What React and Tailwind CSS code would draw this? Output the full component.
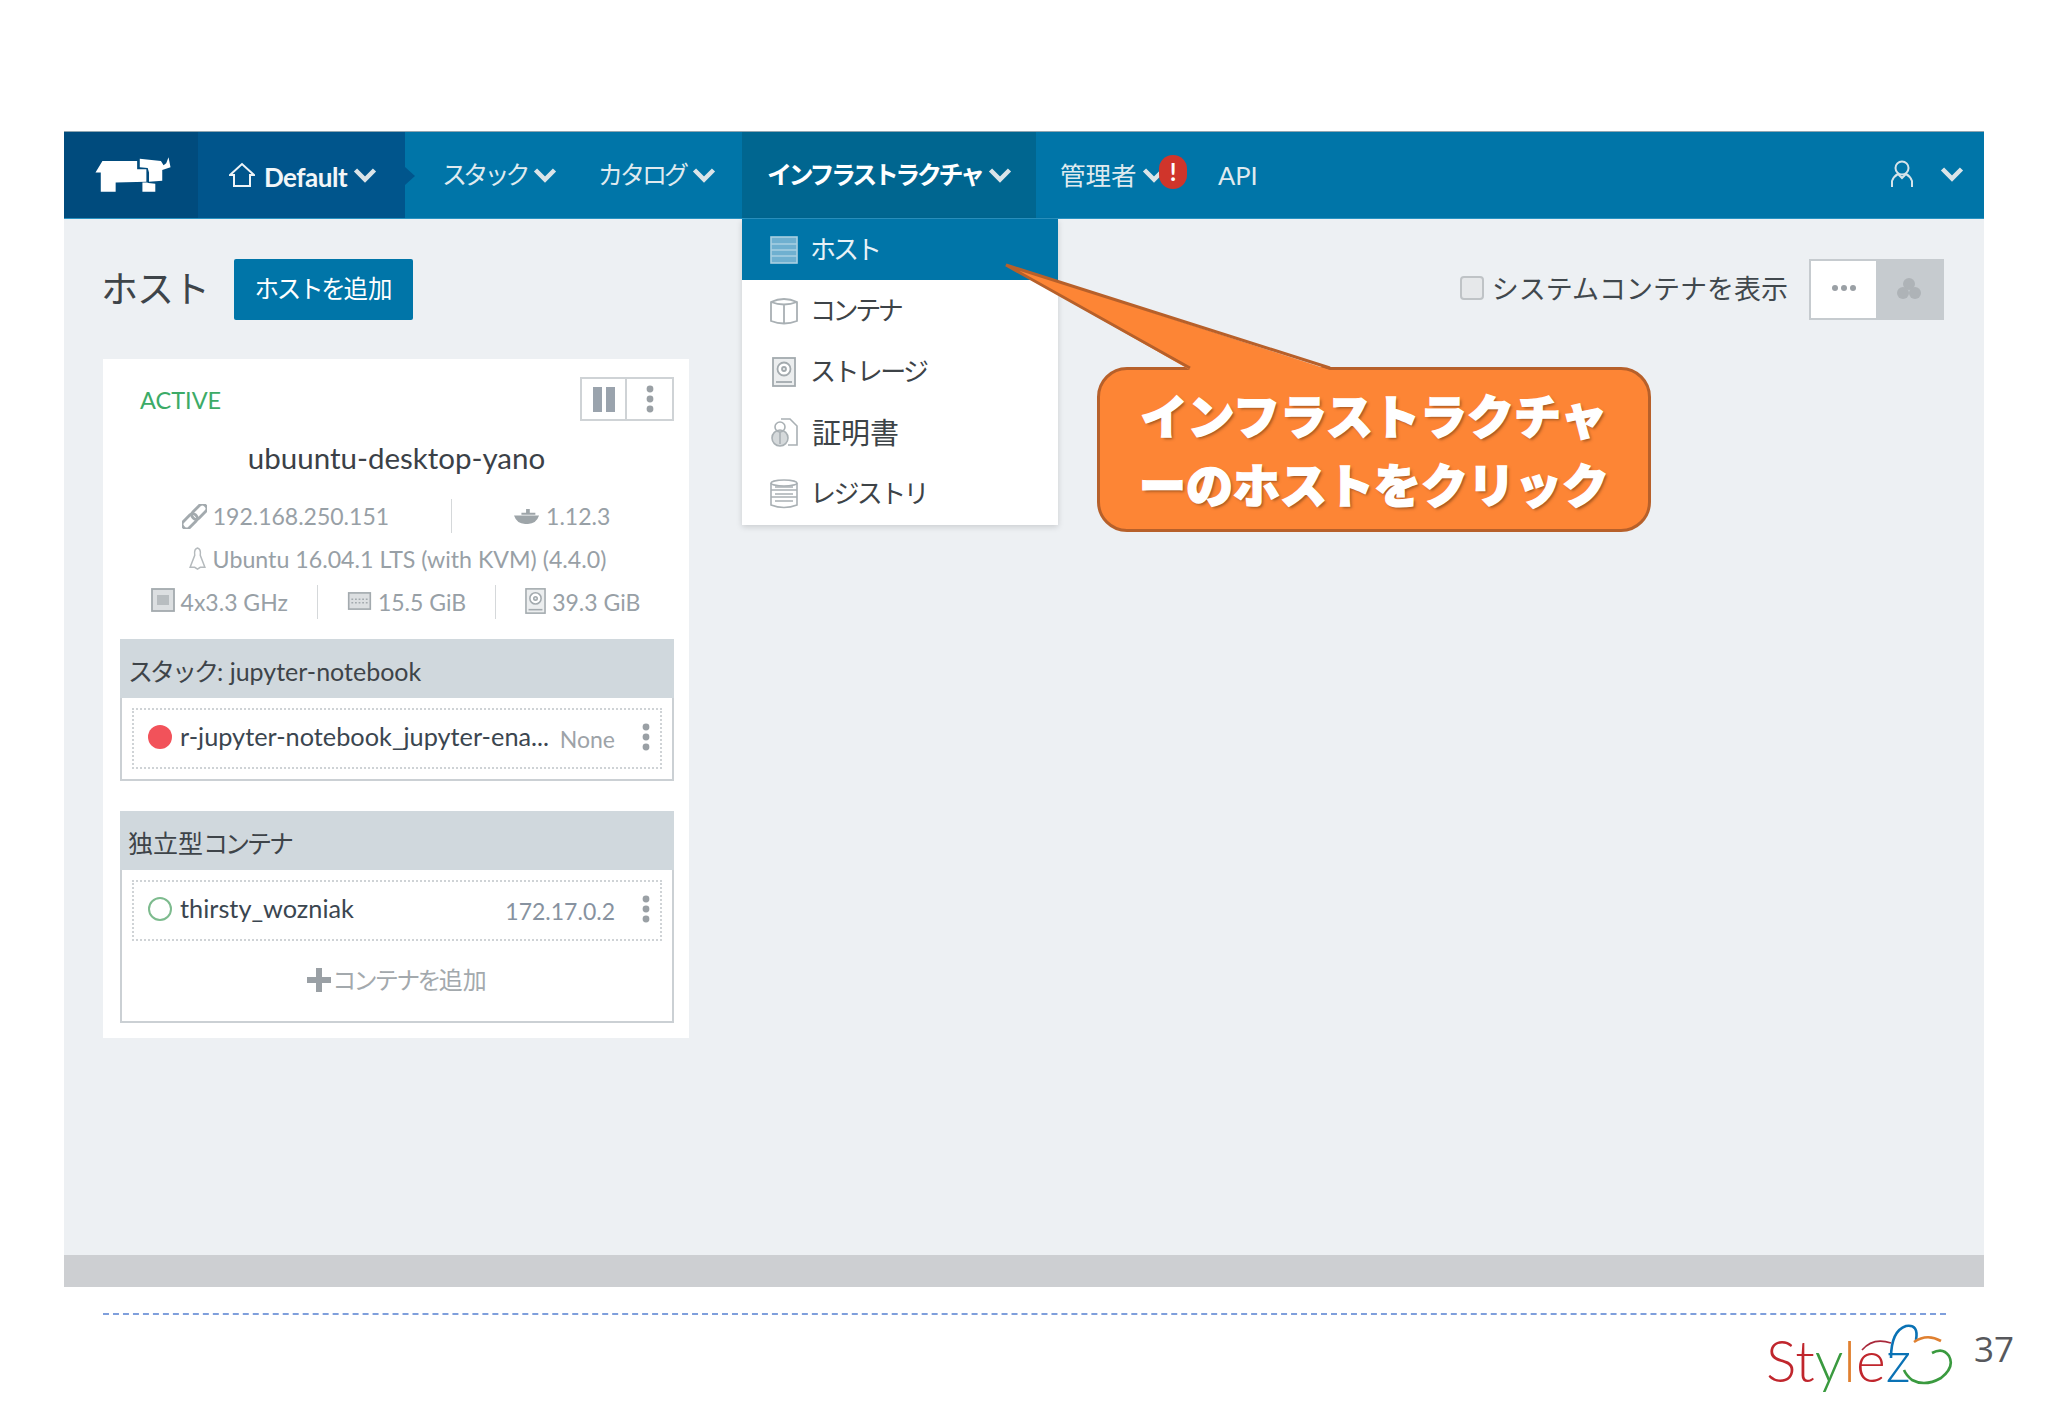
import React from 'react';

const Chev = ({ cls = '' }) => (
  <svg viewBox="0 0 24 16" className={`w-[24px] h-[16px] ${cls}`} fill="none" stroke="#dbe4e8" strokeWidth="4.5"><path d="M2.5 3 L12 12.5 L21.5 3" /></svg>
);
const Kana = ({ children, t = 'tracking-[-3px]' }) => <span className={t}>{children}</span>;

const Rhino = () => (
  <svg viewBox="40 50 235 115" className="w-[78px] h-[38px] ml-[3px]" fill="#fff">
    <path d="M44 100 L65 65 L170 65 L170 90 L198 90 L198 128 L105 130 L105 158 L60 158 L60 100 Z" />
    <path d="M178 58 L242 65 L250 78 L258 72 L265 54 L271 84 L246 92 L246 125 L206 128 L206 100 L202 86 L178 84 Z" />
    <path d="M186 130 L200 130 L204 132 L225 134 L225 158 L186 158 Z" />
  </svg>
);

const ServerI = ({ light }) => (
  <svg viewBox="0 0 28 28" className="w-[28px] h-[30px]" fill={light ? '#6fb0d0' : 'none'} stroke={light ? '#a9d0e2' : '#a9b0b4'} strokeWidth="1.6">
    <rect x="1" y="1" width="26" height="26" /><path d="M1 8h26M1 14h26M1 20h26" />
  </svg>
);
const BoxI = () => (
  <svg viewBox="0 0 28 30" className="w-[28px] h-[30px]" fill="none" stroke="#a9b0b4" strokeWidth="1.8">
    <path d="M1 6 Q14 0 27 6 V25 Q14 30 1 25 Z M1 6 Q14 11 27 6 M14 9 V28" />
  </svg>
);
const DiskI = ({ c = 'w-[24px] h-[30px]' }) => (
  <svg viewBox="0 0 24 30" className={c} fill="#eceeef" stroke="#a3aaae" strokeWidth="1.8">
    <rect x="1" y="1" width="22" height="28" /><circle cx="12" cy="12" r="6.5" fill="#fff" /><circle cx="12" cy="12" r="2" /><path d="M4 25h16" />
  </svg>
);
const CertI = () => (
  <svg viewBox="0 0 28 30" className="w-[28px] h-[30px]" fill="none" stroke="#a9b0b4" strokeWidth="1.6">
    <path d="M11 1 H20 L27 8 V27 H18" /><circle cx="10" cy="20" r="8" fill="#d5d9db" /><circle cx="10" cy="9" r="5" /><path d="M10 14v12" />
  </svg>
);
const RegI = () => (
  <svg viewBox="0 0 28 30" className="w-[28px] h-[30px]" fill="none" stroke="#a9b0b4" strokeWidth="1.6">
    <ellipse cx="14" cy="4" rx="13" ry="3" /><path d="M1 4 V26 Q14 31 27 26 V4 M1 11 H27 M1 18 H27 M5 8h18M5 15h18M5 22h18" />
  </svg>
);
const Sep = () => <div className="w-px h-[34px] bg-[#d5d8da]" />;
const Dots = ({ c = '#9aa0a5' }) => (
  <svg viewBox="0 0 8 28" className="w-[8px] h-[28px]" fill={c}><circle cx="4" cy="4" r="3.4" /><circle cx="4" cy="14" r="3.4" /><circle cx="4" cy="24" r="3.4" /></svg>
);

const MenuItem = ({ icon, children, active }) => (
  <div className={`flex items-center h-[61px] pl-[28px] gap-[12px] text-[26px] ${active ? 'bg-[#0075a8] text-[#e8f2f7]' : 'text-[#3d4347]'}`}>
    {icon}
    <span>{children}</span>
  </div>
);

const Stat = ({ icon, children }) => (
  <div className="flex items-center gap-[6px] text-[#98a0a6]">{icon}<span>{children}</span></div>
);

const Row = ({ dot, name, val, valCls }) => (
  <div className="mx-[10px] my-[10px] h-[61px] border-2 border-dotted border-[#cfd3d6] flex items-center pl-[14px] pr-[10px]">
    {dot}
    <span className="ml-[8px] mb-[3px] text-[25.3px] text-[#3b4650] whitespace-nowrap">{name}</span>
    <span className={`ml-auto mr-[27px] mt-[2px] text-[23px] ${valCls}`}>{val}</span>
    <div className="mb-[3px] flex"><Dots /></div>
  </div>
);

export default function App() {
  return (
    <div className="relative w-[2048px] h-[1418px] bg-white overflow-hidden font-['Lato','Noto_Sans_CJK_JP',sans-serif] pt-[131px]">
      <div className="mx-[64px] w-[1920px]">
        {/* nav */}
        <div className="relative flex h-[88px] bg-[#0075a8] border-t border-[#8fa5b0] border-b border-b-[#2a93c2] text-[#dfeaef] text-[25px]">
          <div className="w-[134px] bg-[#004b7d] flex items-center justify-center"><Rhino /></div>
          <div className="relative w-[207px] bg-[#00558c] flex items-center pl-[31px] text-[#f2f6f8] font-bold">
            <svg viewBox="0 0 26 26" className="w-[26px] h-[26px]" fill="none" stroke="#eef4f7" strokeWidth="2"><path d="M1 13 L13 2 L25 13 H21 V24 H5 V13 Z" /></svg>
            <span className="ml-[9px] mt-[5px] text-[26px] tracking-[-0.5px]">Default</span>
            <Chev cls="ml-[6px]" />
            <div className="absolute left-full top-[35px] w-0 h-0 border-y-[9px] border-y-transparent border-l-[10px] border-l-[#00558c]" />
          </div>
          <div className="flex items-center pl-[37px] w-[193px]"><Kana t="tracking-[-3.8px]">スタック</Kana><Chev cls="ml-[6px]" /></div>
          <div className="flex items-center w-[144px]"><Kana>カタログ</Kana><Chev cls="ml-[6px]" /></div>
          <div className="flex items-center w-[294px] pl-[25px] bg-[#006690] text-white font-bold"><Kana t="tracking-[-3.4px]">インフラストラクチャ</Kana><Chev cls="ml-[6px]" /></div>
          <div className="relative flex items-center pl-[24px] w-[182px]">
            <span className="text-[25.5px]">管理者</span><Chev cls="ml-[5px] w-[20px]" />
            <span className="absolute left-[123px] top-[23px] w-[28px] h-[34px] rounded-full bg-[#d0352b] text-white text-[24px] font-bold flex items-center justify-center leading-none">!</span>
          </div>
          <div className="flex items-center text-[25.5px]">API</div>
          <div className="ml-auto flex items-center gap-[26px] pr-[20px]">
            <svg viewBox="0 0 24 28" className="w-[24px] h-[28px] mb-[2px]" fill="none" stroke="#d6e4ea" strokeWidth="2"><circle cx="12" cy="8" r="6.5" /><path d="M2 27 V21 Q4 16 8 14 L12 18 L16 14 Q20 16 22 21 V27" /></svg>
            <Chev cls="mb-[3px]" />
          </div>
        </div>

        {/* main */}
        <div className="bg-[#edf0f3] h-[1036px] px-[39px]">
          <div className="flex items-center h-[140px]">
            <h1 className="text-[37px] -ml-[2px] text-[#3e4449] font-normal w-[133px] tracking-[-1px]">ホスト</h1>
            <button className="w-[179px] h-[61px] rounded-[2px] bg-[#0075a8] text-white text-[24.5px]"><Kana t="tracking-[-2.2px]">ホストを</Kana>追加</button>
            <label className="ml-auto flex items-center text-[27px] text-[#41484d]">
              <span className="w-[24px] h-[24px] rounded-[4px] border-2 border-[#bfc3c6] bg-[#e6e8ea] mr-[8px] mb-[2px]" />
              システムコンテナを表示
            </label>
            <div className="flex ml-[21px] mr-[1px] h-[61px] border-2 border-[#c6cbcf]">
              <div className="w-[65px] bg-white flex items-center justify-center">
                <svg viewBox="0 0 26 6" className="w-[26px] h-[6px] mb-[2px]" fill="#9aa0a5"><circle cx="4" cy="3" r="3" /><circle cx="13" cy="3" r="3" /><circle cx="22" cy="3" r="3" /></svg>
              </div>
              <div className="w-[66px] bg-[#c6cbcf] flex items-center justify-center">
                <svg viewBox="0 0 26 24" className="w-[26px] h-[24px]" fill="#aeb3b7"><circle cx="13" cy="7" r="6" /><circle cx="7" cy="16" r="6" /><circle cx="19" cy="16" r="6" /></svg>
              </div>
            </div>
          </div>

          {/* card */}
          <div className="w-[586px] h-[679px] bg-white pl-[17px] pr-[15px] pt-[18px] flex flex-col">
            <div className="flex justify-between items-center h-[44px]">
              <span className="ml-[20px] mt-[3px] text-[23.5px] text-[#3cab67]">ACTIVE</span>
              <div className="flex h-[44px] -mr-[1px] -translate-x-[1px] border-2 border-[#cfd3d6]">
                <div className="w-[45px] flex items-center justify-center gap-[4px] border-r-2 border-[#cfd3d6]"><span className="w-[9px] h-[25px] bg-[#9aa3ad]" /><span className="w-[9px] h-[25px] bg-[#9aa3ad]" /></div>
                <div className="w-[45px] flex items-center justify-center"><Dots /></div>
              </div>
            </div>
            <div className="text-center text-[29.5px] leading-[40px] mt-[17px] -ml-[1px] text-[#3b4147]">ubuuntu-desktop-yano</div>

            <div className="flex justify-center items-center gap-[62px] text-[23px] mt-[18px] h-[40px] -ml-[2px]">
              <Stat icon={<svg viewBox="0 0 26 26" className="w-[25px] h-[25px]" fill="none" stroke="#a3aaae" strokeWidth="3"><rect x="-9" y="-4.5" width="18" height="9" rx="4" transform="translate(8 18) rotate(-45)" /><rect x="-9" y="-4.5" width="18" height="9" rx="4" transform="translate(18 8) rotate(-45)" /></svg>}>192.168.250.151</Stat>
              <Sep />
              <Stat icon={<svg viewBox="0 0 28 18" className="w-[26px] h-[17px]" fill="#9ea5a9"><path d="M0 8h27q-3 9-12 9h-3Q3 17 0 8z M8 5h5V1h4v4h6v2H8z" /></svg>}>1.12.3</Stat>
            </div>
            <div className="flex justify-center items-center text-[23.2px] h-[40px] mt-[3px]">
              <Stat icon={<svg viewBox="0 0 20 26" className="w-[19px] h-[24px]" fill="none" stroke="#b5babd" strokeWidth="1.6"><path d="M10 1 Q14 2 13 9 L18 22 H13 L10 24 L7 22 H2 L7 9 Q6 2 10 1 Z" /></svg>}>Ubuntu 16.04.1 LTS (with KVM) (4.4.0)</Stat>
            </div>
            <div className="flex justify-center items-center gap-[29px] text-[23px] h-[40px] mt-[3px] -ml-[3px]">
              <Stat icon={<svg viewBox="0 0 24 24" className="w-[24px] h-[24px] mb-[4px]" fill="#dcdfe1" stroke="#a3aaae" strokeWidth="1.8"><rect x="1" y="1" width="22" height="22" /><rect x="6" y="7" width="12" height="10" fill="#b8bdc0" stroke="none" /></svg>}>4x3.3 GHz</Stat>
              <Sep />
              <Stat icon={<svg viewBox="0 0 26 20" className="w-[25px] h-[18px] mb-[2px]" fill="#dcdfe1" stroke="#a3aaae" strokeWidth="1.8"><rect x="1" y="1" width="24" height="18" /><path d="M4 8h18M4 12h18" strokeDasharray="2 2" /></svg>}>15.5 GiB</Stat>
              <Sep />
              <Stat icon={<DiskI c="w-[21px] h-[26px] mb-[2px]" />}>39.3 GiB</Stat>
            </div>

            <div className="mt-[17px] h-[142px] border-2 border-t-0 border-[#cbd0d4]">
              <div className="h-[59px] -mx-[2px] bg-[#d0d8dd] flex items-center pl-[8px] pt-[6px] text-[25px] text-[#3e4449]"><Kana t="tracking-[-3px]">スタック</Kana><span className="ml-[1px]">:&nbsp;jupyter-notebook</span></div>
              <Row
                dot={<span className="w-[24px] h-[24px] mb-[3px] rounded-full bg-[#f2525a]" />}
                name="r-jupyter-notebook_jupyter-ena..."
                val="None"
                valCls="text-[#9da3a8]"
              />
            </div>

            <div className="mt-[30px] h-[212px] border-2 border-t-0 border-[#cbd0d4]">
              <div className="h-[59px] -mx-[2px] bg-[#d0d8dd] flex items-center pl-[8px] pt-[6px] text-[25px] text-[#3e4449]">独立型<Kana t="tracking-[-3px]">コンテナ</Kana></div>
              <Row
                dot={<span className="w-[24px] h-[24px] mb-[3px] rounded-full border-2 border-[#7dbb8e]" />}
                name="thirsty_wozniak"
                val="172.17.0.2"
                valCls="text-[#8792a0]"
              />
              <div className="flex items-center justify-center text-[24px] text-[#a3a9ad] mt-[21px]">
                <svg viewBox="0 0 24 24" className="w-[24px] h-[24px] mr-[1px]" fill="#9aa0a5"><path d="M9 0h6v9h9v6h-9v9H9v-9H0V9h9z" /></svg>
                <Kana t="tracking-[-2.7px]">コンテナを</Kana>追加
              </div>
            </div>
          </div>
        </div>

        {/* status bar */}
        <div className="h-[32px] bg-[#cdcfd2]" />
      </div>

      {/* footer */}
      <div className="mt-[26px] ml-[103px] w-[1843px] h-0 border-t-2 border-dashed border-[#7f9fdc]" />
      <div className="flex justify-end items-start pr-[34px] mt-[8px]">
        <div className="relative w-[186px] h-[76px] mr-[23px] text-[57px] font-light leading-none pt-[9px] pl-[1px] whitespace-nowrap">
          <span className="text-[#c0262d]">St</span><span className="text-[#3a9a3f]">y</span><span className="text-[#e08030]">l</span><span className="text-[#c0262d]">e</span><span className="text-[#0a72b5]">z</span>
          <svg viewBox="0 0 190 76" className="absolute left-0 top-0 w-[190px] h-[76px]" fill="none" strokeWidth="2.6">
            <path d="M126 35 Q126 8 141 3 Q154 1 151 17" stroke="#0a72b5" />
            <path d="M149 19 Q162 10 176 18" stroke="#e08030" />
            <path d="M167 30 Q178 24 184 33 Q190 44 176 55 Q160 64 147 57 Q141 52 139 47" stroke="#3a9a3f" />
            <path d="M97 27 Q108 14 126 20" stroke="#a8283a" strokeWidth="1.6" />
          </svg>
        </div>
        <span className="text-[35px] text-[#57585c] leading-none mt-[8px] font-['Open_Sans',sans-serif]">37</span>
      </div>

      {/* dropdown */}
      <div className="absolute left-[742px] top-[219px] w-[316px] h-[306px] bg-white shadow-[0_2px_6px_rgba(0,0,0,0.15)]">
        <MenuItem active icon={<ServerI light />}><Kana>ホスト</Kana></MenuItem>
        <MenuItem icon={<BoxI />}><Kana t="tracking-[-3.4px]">コンテナ</Kana></MenuItem>
        <MenuItem icon={<DiskI c="w-[28px] h-[30px]" />}><span className="tracking-[-2.6px]">ストレージ</span></MenuItem>
        <MenuItem icon={<CertI />}><span className="text-[29px] ml-[2px]">証明書</span></MenuItem>
        <MenuItem icon={<RegI />}><span className="tracking-[-2.6px]">レジストリ</span></MenuItem>
      </div>

      {/* callout */}
      <div className="absolute left-[1097px] top-[367px] w-[554px] h-[165px] rounded-[30px] bg-[#fd8535] border-[3px] border-[#b7602a] flex items-center justify-center">
        <p className="text-white font-black text-[47px] leading-[69px] text-center [-webkit-text-stroke:1.5px_white] [text-shadow:2px_2px_3px_rgba(110,60,20,0.65)] whitespace-nowrap mt-[3px]">インフラストラクチャ<br />ーのホストをクリック</p>
      </div>
      <svg viewBox="0 0 340 110" className="absolute left-[1000px] top-[262px] w-[340px] h-[110px]">
        <path d="M6 3 L190 108 L330 108 Z" fill="#fd8535" stroke="none" />
        <path d="M190 106 L6 3 L330 106" fill="none" stroke="#b7602a" strokeWidth="3" />
      </svg>
    </div>
  );
}
